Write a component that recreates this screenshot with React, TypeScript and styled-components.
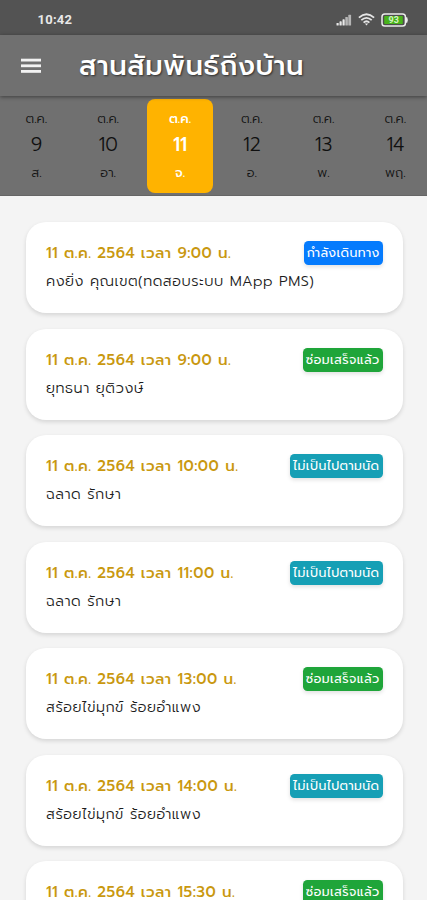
import React from 'react';
import styled, { createGlobalStyle } from 'styled-components';

const GlobalStyle = createGlobalStyle`
  * { box-sizing: border-box; }
  html, body { margin: 0; padding: 0; }
  body {
    background: #f4f4f4;
    font-family: Prompt, "Open Sans", "Noto Sans Thai", "Noto Sans", sans-serif;
    overflow: hidden;
  }
`;

const Screen = styled.div`
  width: 427px;
  height: 900px;
  overflow: hidden;
  display: flex;
  flex-direction: column;
  background: #f4f4f4;
`;

const StatusBar = styled.div`
  flex: none;
  height: 35px;
  padding: 4px 18px 0 37.5px;
  display: flex;
  align-items: center;
  justify-content: space-between;
  background: #535353;
`;

const Clock = styled.span`
  font: 700 13px/16px Roboto, sans-serif;
  letter-spacing: 0.25px;
  color: #e8e8e8;
`;

const StatusIcons = styled.div`
  display: flex;
  align-items: center;
  gap: 6px;
`;

const AppBar = styled.header`
  flex: none;
  position: relative;
  height: 61px;
  padding: 0 20px;
  display: flex;
  align-items: center;
  gap: 37px;
  background: #707070;
  box-shadow: 0 1px 4px rgba(0, 0, 0, 0.45);
`;

const MenuIcon = styled.svg`
  display: block;
  flex: none;
`;

const Title = styled.h1`
  margin: 0;
  font-size: 27.5px;
  line-height: 40px;
  font-weight: 500;
  letter-spacing: 0.5px;
  white-space: nowrap;
  color: #fff;
  text-shadow: 1px 1px 2px rgba(0, 0, 0, 0.6);
`;

const DateStrip = styled.nav`
  flex: none;
  height: 100px;
  padding: 3px 0 2px;
  display: grid;
  grid-template-columns: repeat(6, 71.8px);
  background: #707070;
  border-bottom: 1px solid #656565;
`;

const Day = styled.div<{ $active?: boolean }>`
  margin: 0 2.5px 0 3.5px;
  padding-top: 9px;
  display: flex;
  flex-direction: column;
  align-items: center;
  border-radius: 8px;
  background: ${(p) => (p.$active ? '#ffb300' : 'transparent')};
  color: ${(p) => (p.$active ? '#fff' : '#101010')};
  font-weight: ${(p) => (p.$active ? 500 : 300)};
`;

const DaySmall = styled.span`
  font-size: 13px;
  line-height: 22px;
`;

const DayNumber = styled.span<{ $active?: boolean }>`
  font-size: 19px;
  line-height: 29px;
  height: 32px;
  font-weight: ${(p) => (p.$active ? 500 : 300)};
`;

const List = styled.main`
  flex: 1;
  min-height: 0;
  padding: 26px 24px 0 26px;
  display: flex;
  flex-direction: column;
  gap: 15.5px;
  overflow: hidden;
`;

const Card = styled.article`
  flex: none;
  height: 91px;
  padding: 19.4px 20px 0;
  border-radius: 20px;
  background: #fff;
  box-shadow: 0 2px 4px rgba(0, 0, 0, 0.13);
`;

const CardTop = styled.div`
  display: flex;
  align-items: center;
  justify-content: space-between;
  height: 24px;
`;

const When = styled.span`
  font-size: 15px;
  line-height: 24px;
  font-weight: 500;
  letter-spacing: 0.47px;
  white-space: nowrap;
  color: #c9980f;
`;

const Name = styled.div`
  margin-top: 4px;
  font-size: 14.5px;
  line-height: 24px;
  font-weight: 300;
  letter-spacing: 0.52px;
  white-space: nowrap;
  color: #1c1c1c;
`;

type Status = 'travel' | 'done' | 'missed';

const statusInfo: Record<Status, { label: string; color: string; width: number }> = {
  travel: { label: 'กำลังเดินทาง', color: '#057bfd', width: 79.5 },
  done: { label: 'ซ่อมเสร็จแล้ว', color: '#1fa53a', width: 80.5 },
  missed: { label: 'ไม่เป็นไปตามนัด', color: '#169fb5', width: 93.5 },
};

const Badge = styled.span<{ $color: string; $width: number }>`
  width: ${(p) => p.$width}px;
  height: 24px;
  border-radius: 4.5px;
  text-align: center;
  font-size: 12.5px;
  line-height: 24px;
  font-weight: 400;
  letter-spacing: 0.4px;
  white-space: nowrap;
  color: #fff;
  background: ${(p) => p.$color};
  box-shadow: 0 2px 4px rgba(0, 0, 0, 0.12);
`;

const days = [
  ['9', 'ส.'],
  ['10', 'อา.'],
  ['11', 'จ.'],
  ['12', 'อ.'],
  ['13', 'พ.'],
  ['14', 'พฤ.'],
];

const visits: { time: string; name: string; status: Status }[] = [
  { time: '9:00', name: 'คงยิ่ง คุณเขต(ทดสอบระบบ MApp PMS)', status: 'travel' },
  { time: '9:00', name: 'ยุทธนา ยุติวงษ์', status: 'done' },
  { time: '10:00', name: 'ฉลาด รักษา', status: 'missed' },
  { time: '11:00', name: 'ฉลาด รักษา', status: 'missed' },
  { time: '13:00', name: 'สร้อยไข่มุกข์ ร้อยอำแพง', status: 'done' },
  { time: '14:00', name: 'สร้อยไข่มุกข์ ร้อยอำแพง', status: 'missed' },
  { time: '15:30', name: 'สร้อยไข่มุกข์ ร้อยอำแพง', status: 'done' },
];

const SignalIcon = () => (
  <svg width="16" height="12" viewBox="0 0 16 12">
    <g fill="#e8e8e8">
      <rect x="0.5" y="9" width="2.2" height="2.5" rx="0.6" />
      <rect x="3.5" y="7.3" width="2.2" height="4.2" rx="0.6" />
      <rect x="6.5" y="5.3" width="2.2" height="6.2" rx="0.6" />
    </g>
    <g fill="#b5b5b5">
      <rect x="9.3" y="3" width="2.6" height="8.5" rx="0.6" />
      <rect x="12.3" y="0.8" width="2.8" height="10.7" rx="0.6" />
    </g>
  </svg>
);

const WifiIcon = () => (
  <svg width="17" height="13" viewBox="0 0 17 13" fill="none" stroke="#e6e6e6" strokeWidth="1.8">
    <path d="M0.9 4.6Q8.5 -2.2 16.1 4.6" />
    <path d="M3.3 7.2Q8.5 2.6 13.7 7.2" />
    <path d="M5.6 9.6Q8.5 7 11.4 9.6" />
    <path d="M6.8 10.4L8.5 12.6L10.2 10.4Z" fill="#e6e6e6" stroke="none" />
  </svg>
);

const BatteryIcon = () => (
  <svg width="28" height="14" viewBox="0 0 28 14">
    <rect x="1" y="1" width="23.4" height="12" rx="2.8" fill="#4c4c4c" stroke="#ececec" strokeWidth="1.5" />
    <path d="M25 4.3H26.2Q27.6 7 26.2 9.7H25Z" fill="#ececec" />
    <rect x="3.2" y="3" width="18.6" height="8" rx="0.8" fill="#48b21b" />
    <text x="12.7" y="10.1" textAnchor="middle" fontFamily="Roboto, sans-serif" fontWeight="700" fontSize="9" fill="#d5f3c4">
      93
    </text>
  </svg>
);

export default function App() {
  return (
    <Screen>
      <GlobalStyle />
      <StatusBar>
        <Clock>10:42</Clock>
        <StatusIcons>
          <SignalIcon />
          <WifiIcon />
          <BatteryIcon />
        </StatusIcons>
      </StatusBar>
      <AppBar>
        <MenuIcon width="22" height="16" viewBox="0 0 22 16" fill="#f2f2f2">
          <rect x="1" y="0.7" width="20" height="2.8" />
          <rect x="1" y="6.4" width="20" height="2.8" />
          <rect x="1" y="12" width="20" height="2.8" />
        </MenuIcon>
        <Title>สานสัมพันธ์ถึงบ้าน</Title>
      </AppBar>
      <DateStrip>
        {days.map(([n, d]) => (
          <Day key={n} $active={n === '11'}>
            <DaySmall>ต.ค.</DaySmall>
            <DayNumber $active={n === '11'}>{n}</DayNumber>
            <DaySmall>{d}</DaySmall>
          </Day>
        ))}
      </DateStrip>
      <List>
        {visits.map((v, i) => (
          <Card key={i}>
            <CardTop>
              <When>11 ต.ค. 2564 เวลา {v.time} น.</When>
              <Badge $color={statusInfo[v.status].color} $width={statusInfo[v.status].width}>
                {statusInfo[v.status].label}
              </Badge>
            </CardTop>
            <Name>{v.name}</Name>
          </Card>
        ))}
      </List>
    </Screen>
  );
}
